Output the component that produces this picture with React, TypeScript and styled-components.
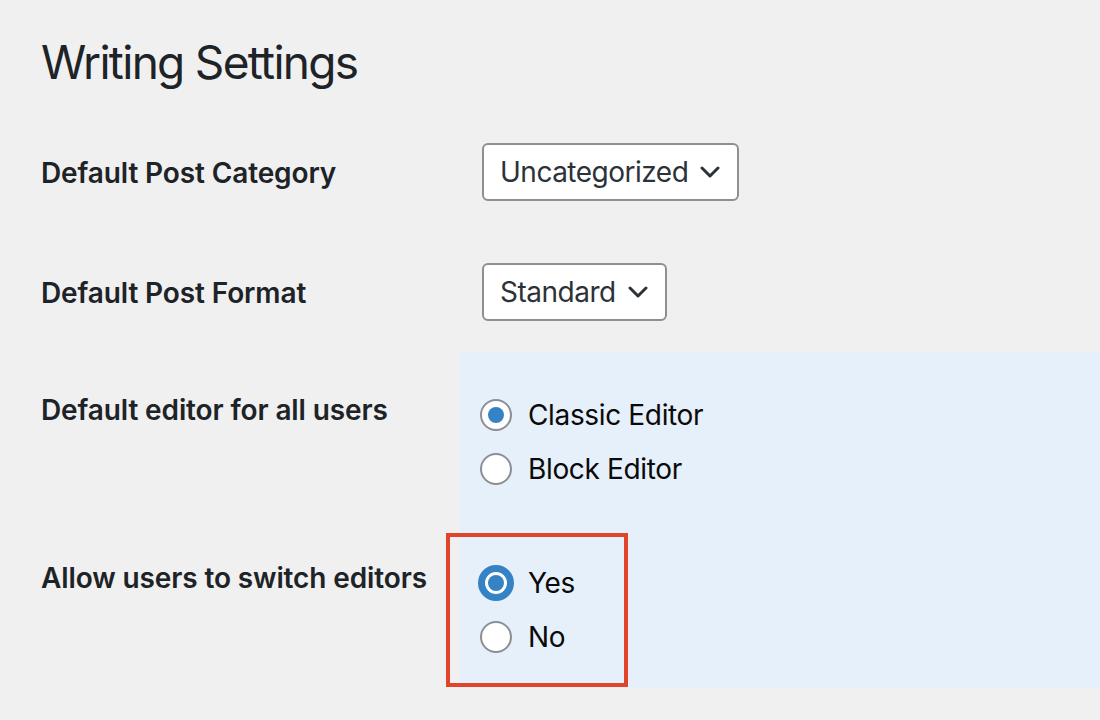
import React from "react";
import styled, { createGlobalStyle } from "styled-components";

const Global = createGlobalStyle`
  html, body { margin: 0; padding: 0; background: #f0f0f1; }
  body { font-family: Inter, "Noto Sans", sans-serif; color: #1d2327; }
  #root { min-height: 720px; }
`;

const Page = styled.div`
  padding: 39px 0 0 41px;
  width: 1059px;
  height: 681px;
  overflow: hidden;
`;

const Title = styled.h1`
  margin: 0;
  font-size: 46px;
  line-height: 46px;
  font-weight: 400;
  letter-spacing: -1.7px;
  color: #1d2327;
`;

const Form = styled.div`
  margin-top: 27px;
  display: flex;
  flex-direction: column;
`;

const Row = styled.div<{ $h?: number }>`
  display: flex;
  align-items: stretch;
  ${(p) => (p.$h ? `height: ${p.$h}px;` : "")}
`;

const Label = styled.div<{ $top: number }>`
  width: 419px;
  flex: none;
  box-sizing: border-box;
  padding-top: ${(p) => p.$top}px;
  font-size: 28px;
  line-height: 28px;
  font-weight: 600;
  letter-spacing: -0.12px;
  color: #1d2327;
`;

const Field = styled.div<{ $hl?: boolean; $pt?: number; $pl?: number }>`
  flex: 1;
  box-sizing: border-box;
  padding-top: ${(p) => p.$pt ?? 0}px;
  padding-left: ${(p) => p.$pl ?? 22}px;
  background: ${(p) => (p.$hl ? "#e6f0fa" : "transparent")};
  display: flex;
  flex-direction: column;
  align-items: flex-start;
`;

const SelectBox = styled.div`
  display: inline-flex;
  align-items: center;
  height: 58px;
  box-sizing: border-box;
  border: 2px solid #8c8f94;
  border-radius: 6px;
  background: #fff;
  padding: 0 17px 0 16px;
  gap: 12px;
  font-size: 28px;
  letter-spacing: -0.5px;
  color: #2c3338;
`;

const Chevron = () => (
  <svg width="20" height="12" viewBox="0 0 20 12" aria-hidden>
    <polyline
      points="2,2 10,10 18,2"
      fill="none"
      stroke="#2c3338"
      strokeWidth="3"
      strokeLinecap="round"
      strokeLinejoin="round"
    />
  </svg>
);

const Options = styled.div`
  display: flex;
  flex-direction: column;
  gap: 22px;
`;

const Option = styled.label`
  display: flex;
  align-items: center;
  gap: 16px;
  height: 32px;
  font-size: 28px;
  letter-spacing: -0.35px;
  color: #0a0a0a;
`;

const Radio = styled.span<{ $checked?: boolean; $focus?: boolean }>`
  width: 32px;
  height: 32px;
  box-sizing: border-box;
  border-radius: 50%;
  background: #fff;
  border: ${(p) => (p.$focus ? "5px solid #3582c4" : "2px solid #8c8f94")};
  box-shadow: ${(p) => (p.$focus ? "0 0 0 2px #3582c4" : "none")};
  display: flex;
  align-items: center;
  justify-content: center;
  flex: none;
  &::after {
    content: "";
    display: ${(p) => (p.$checked ? "block" : "none")};
    width: 16px;
    height: 16px;
    border-radius: 50%;
    background: #3582c4;
  }
`;

const Callout = styled.div`
  margin-left: -34px;
  width: 182px;
  height: 154px;
  box-sizing: border-box;
  border: 4px solid #e0452c;
  padding: 30px 0 0 30px;
`;

export default function App() {
  return (
    <>
      <Global />
      <Page>
        <Title>Writing Settings</Title>
        <Form>
          <Row $h={120}>
            <Label $top={47}>Default Post Category</Label>
            <Field $pt={31}>
              <SelectBox>
                Uncategorized
                <Chevron />
              </SelectBox>
            </Field>
          </Row>
          <Row $h={120}>
            <Label $top={47}>Default Post Format</Label>
            <Field $pt={31}>
              <SelectBox>
                Standard
                <Chevron />
              </SelectBox>
            </Field>
          </Row>
          <Row $h={181}>
            <Label $top={44}>Default editor for all users</Label>
            <Field $hl $pt={47} $pl={20}>
              <Options>
                <Option>
                  <Radio $checked />
                  Classic Editor
                </Option>
                <Option>
                  <Radio />
                  Block Editor
                </Option>
              </Options>
            </Field>
          </Row>
          <Row $h={155}>
            <Label $top={31}>Allow users to switch editors</Label>
            <Field $hl $pl={20}>
              <Callout>
                <Options>
                  <Option>
                    <Radio $checked $focus />
                    Yes
                  </Option>
                  <Option>
                    <Radio />
                    No
                  </Option>
                </Options>
              </Callout>
            </Field>
          </Row>
        </Form>
      </Page>
    </>
  );
}
